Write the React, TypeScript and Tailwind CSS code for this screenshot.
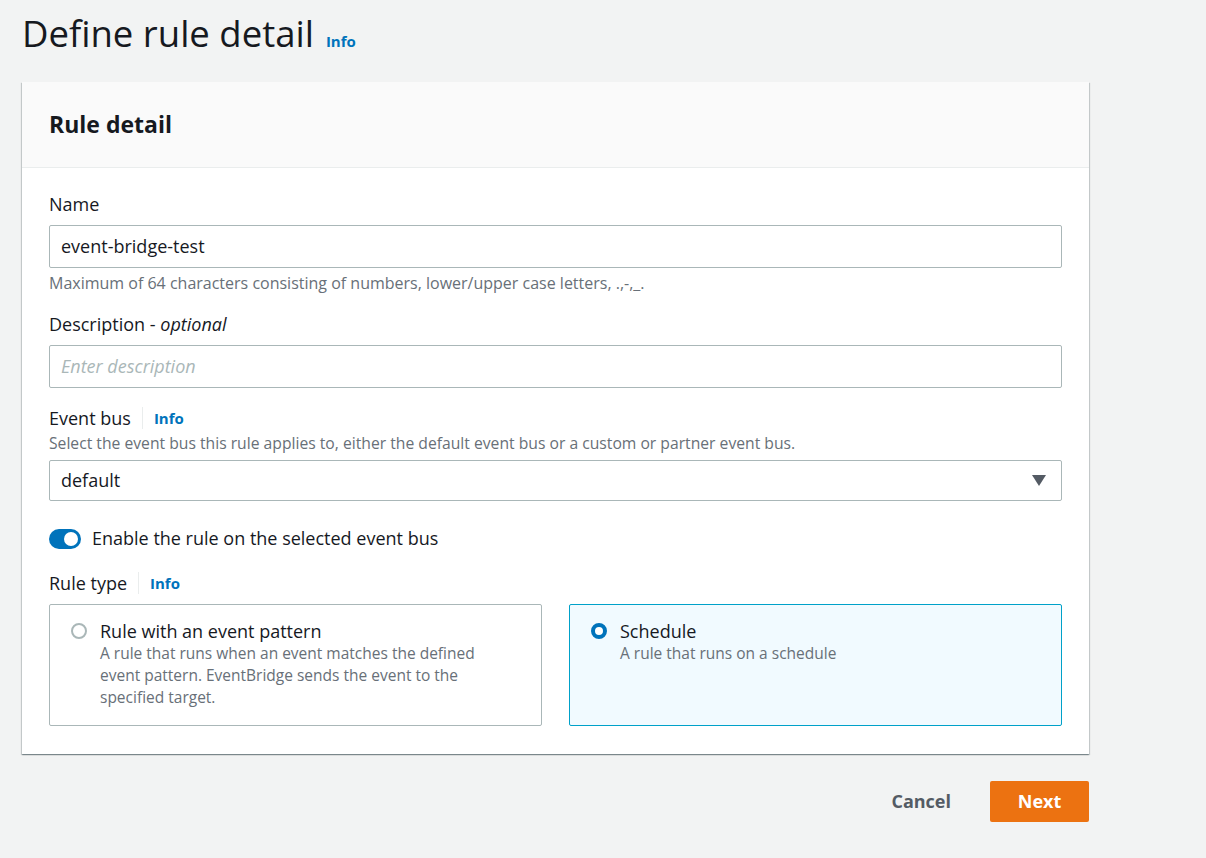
import React from "react";

const font = { fontFamily: '"Open Sans", "Noto Sans", Arial, sans-serif' };

function InfoLink({ className = "" }: { className?: string }) {
  return (
    <span className={`text-[15px] font-bold text-[#0073bb] ${className}`}>
      Info
    </span>
  );
}

function LabelWithInfo({ label }: { label: string }) {
  return (
    <div className="flex items-center h-[22px]">
      <span className="text-[18px] text-[#16191f]">{label}</span>
      <span className="mx-[11px] h-[22px] w-px bg-[#eaeded]" />
      <InfoLink />
    </div>
  );
}

function Tile({
  title,
  desc,
  selected,
}: {
  title: string;
  desc: string;
  selected?: boolean;
}) {
  return (
    <div
      className={`flex-1 h-[122px] rounded-[2px] border pl-[21px] pr-5 pt-[15px] ${
        selected ? "border-[#00a1c9] bg-[#f1faff]" : "border-[#aab7b8] bg-white"
      }`}
    >
      <div className="flex gap-[13px]">
        <div className="pt-[3px]">
          {selected ? (
            <div className="w-4 h-4 rounded-full border-[4px] border-[#0073bb] bg-white" />
          ) : (
            <div className="w-4 h-4 rounded-full border-2 border-[#aab7b8] bg-white" />
          )}
        </div>
        <div>
          <div className="text-[18px] leading-[22px] text-[#16191f]">{title}</div>
          <div className="text-[15.5px] leading-[22px] text-[#687078] max-w-[385px]">
            {desc}
          </div>
        </div>
      </div>
    </div>
  );
}

export default function App() {
  return (
    <div className="min-h-[858px] bg-[#f2f3f3] pl-[22px] pt-[10px]" style={font}>
      {/* Page header */}
      <div className="flex items-baseline h-[46px]">
        <h1 className="text-[36.5px] leading-[46px] text-[#16191f]">Define rule detail</h1>
        <InfoLink className="ml-[12px]" />
      </div>

      {/* Container */}
      <div className="mt-[26px] w-[1067px] bg-white shadow-[0_1px_1px_0_rgba(0,28,36,0.3),1px_1px_1px_0_rgba(0,28,36,0.15),-1px_1px_1px_0_rgba(0,28,36,0.15)]">
        <div className="h-[86px] flex items-center px-[27px] bg-[#fafafa] border-b border-[#eaeded]">
          <h2 className="text-[23px] font-bold text-[#16191f]">Rule detail</h2>
        </div>

        <div className="px-[27px] pt-[25px] pb-[28px] text-[#16191f]">
          {/* Name */}
          <div className="text-[18px] leading-[22px]">Name</div>
          <div className="mt-[10px] h-[43px] border border-[#aab7b8] rounded-[2px] flex items-center px-[11px] text-[18px]">
            event-bridge-test
          </div>
          <div className="mt-[5px] text-[16px] leading-[20px] text-[#687078]">
            Maximum of 64 characters consisting of numbers, lower/upper case letters, .,-,_.
          </div>

          {/* Description */}
          <div className="mt-[20px] text-[18px] leading-[22px]">
            Description - <i>optional</i>
          </div>
          <div className="mt-[10px] h-[43px] border border-[#aab7b8] rounded-[2px] flex items-center px-[11px] text-[18px] italic text-[#aab7b8]">
            Enter description
          </div>

          {/* Event bus */}
          <div className="mt-[19px]">
            <LabelWithInfo label="Event bus" />
          </div>
          <div className="mt-[4px] text-[15.7px] leading-[20px] text-[#687078]">
            Select the event bus this rule applies to, either the default event bus or a custom or partner event bus.
          </div>
          <div className="mt-[7px] h-[41px] border border-[#aab7b8] rounded-[2px] flex items-center justify-between pl-[11px] pr-[15px] text-[18px]">
            <span>default</span>
            <svg width="14" height="11" viewBox="0 0 14 11">
              <path d="M0 0 H14 L7 11 Z" fill="#545b64" />
            </svg>
          </div>

          {/* Toggle */}
          <div className="mt-[27px] flex items-center gap-[11px] h-[21px]">
            <div className="w-[32px] h-[20px] rounded-full bg-[#0073bb] relative">
              <div className="absolute right-[3px] top-[3px] w-[14px] h-[14px] rounded-full bg-white" />
            </div>
            <span className="text-[18px]">Enable the rule on the selected event bus</span>
          </div>

          {/* Rule type */}
          <div className="mt-[23px]">
            <LabelWithInfo label="Rule type" />
          </div>
          <div className="mt-[10px] flex gap-[27px]">
            <Tile
              title="Rule with an event pattern"
              desc="A rule that runs when an event matches the defined event pattern. EventBridge sends the event to the specified target."
            />
            <Tile title="Schedule" desc="A rule that runs on a schedule" selected />
          </div>
        </div>
      </div>

      {/* Actions */}
      <div className="w-[1067px] mt-[27px] flex justify-end items-center">
        <span className="text-[18px] font-bold text-[#545b64] mr-[39px]">Cancel</span>
        <div className="w-[99px] h-[41px] rounded-[2px] bg-[#ec7211] flex items-center justify-center text-[18px] font-bold text-white">
          Next
        </div>
      </div>
    </div>
  );
}
